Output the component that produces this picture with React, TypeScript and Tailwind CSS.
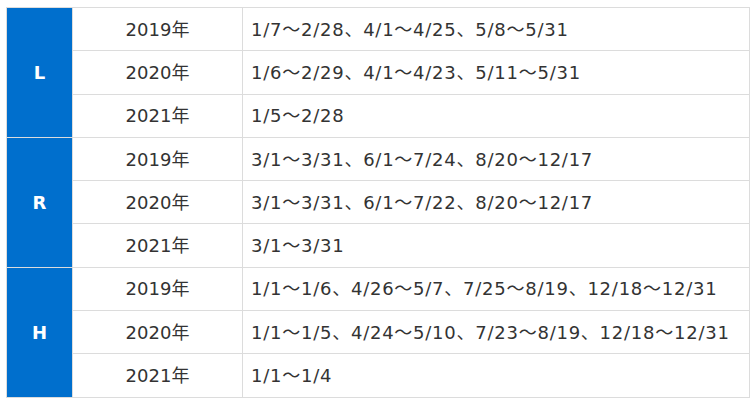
const GROUPS = [
  {
    label: 'L',
    rows: [
      { year: '2019年', dates: '1/7～2/28、4/1～4/25、5/8～5/31' },
      { year: '2020年', dates: '1/6～2/29、4/1～4/23、5/11～5/31' },
      { year: '2021年', dates: '1/5～2/28' },
    ],
  },
  {
    label: 'R',
    rows: [
      { year: '2019年', dates: '3/1～3/31、6/1～7/24、8/20～12/17' },
      { year: '2020年', dates: '3/1～3/31、6/1～7/22、8/20～12/17' },
      { year: '2021年', dates: '3/1～3/31' },
    ],
  },
  {
    label: 'H',
    rows: [
      { year: '2019年', dates: '1/1～1/6、4/26～5/7、7/25～8/19、12/18～12/31' },
      { year: '2020年', dates: '1/1～1/5、4/24～5/10、7/23～8/19、12/18～12/31' },
      { year: '2021年', dates: '1/1～1/4' },
    ],
  },
];

export default function App() {
  return (
    <div className="h-[406px] w-[750px] overflow-hidden bg-white pl-[6px] pt-[7px] font-['DejaVu_Sans','Noto_Sans_CJK_JP',sans-serif] text-[18px] text-[#333]">
      <table className="w-[744px] table-fixed border-collapse">
        <colgroup>
          <col className="w-[66px]" />
          <col className="w-[170px]" />
          <col />
        </colgroup>
        <tbody>
          {GROUPS.map((g) =>
            g.rows.map((r, i) => (
              <tr key={g.label + r.year} className="h-[43.3px]">
                {i === 0 && (
                  <td
                    rowSpan={3}
                    className="border border-[#dcdcdc] bg-[#006fcd] text-center font-bold text-white"
                  >
                    {g.label}
                  </td>
                )}
                <td className="border border-[#dcdcdc] text-center">{r.year}</td>
                <td className="border border-[#dcdcdc] pl-[8px] whitespace-nowrap tracking-[0.75px]">
                  {r.dates}
                </td>
              </tr>
            )),
          )}
        </tbody>
      </table>
    </div>
  );
}
